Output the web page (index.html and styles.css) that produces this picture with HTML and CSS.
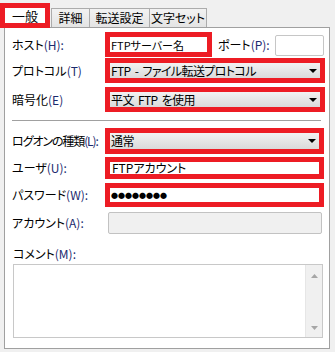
FILE: index.html
```html
<!DOCTYPE html>
<html lang="ja">
<head>
  <meta charset="UTF-8" />
  <title>サイトの設定</title>
  <link rel="stylesheet" href="styles.css">
</head>
<body>
  <div class="tabs">
    <div class="tab active">一般</div>
    <div class="tab w39">詳細</div>
    <div class="tab w61">転送設定</div>
    <div class="tab w58">文字セット</div>
  </div>

  <div class="panel">
    <div class="row r-host">
      <label class="lbl">ホスト<span class="key">(H):</span></label>
      <div class="mark host">
        <div class="field small">FTPサーバー名</div>
      </div>
      <label class="lbl port-lbl">ポート<span class="key">(P):</span></label>
      <div class="port"></div>
    </div>

    <div class="row r-proto">
      <label class="lbl">プロトコル<span class="key">(T)</span></label>
      <div class="mark wide">
        <div class="combo">
          <span>FTP - ファイル転送プロトコル</span>
          <svg width="8" height="4" viewBox="0 0 8 4"><path d="M0 0H8L4 4Z" fill="#000"/></svg>
        </div>
      </div>
    </div>

    <div class="row r-enc">
      <label class="lbl">暗号化<span class="key">(E)</span></label>
      <div class="mark wide">
        <div class="combo">
          <span>平文 FTP を使用</span>
          <svg width="8" height="4" viewBox="0 0 8 4"><path d="M0 0H8L4 4Z" fill="#000"/></svg>
        </div>
      </div>
    </div>

    <div class="sep"></div>

    <div class="row r-logon">
      <label class="lbl tight">ログオンの種類<span class="key">(L):</span></label>
      <div class="mark wide2">
        <div class="combo">
          <span>通常</span>
          <svg width="8" height="4" viewBox="0 0 8 4"><path d="M0 0H8L4 4Z" fill="#000"/></svg>
        </div>
      </div>
    </div>

    <div class="row r-user">
      <label class="lbl">ユーザ<span class="key">(U):</span></label>
      <div class="mark wide2">
        <div class="field">FTPアカウント</div>
      </div>
    </div>

    <div class="row r-pass">
      <label class="lbl">パスワード<span class="key">(W):</span></label>
      <div class="mark wide2">
        <div class="field dots">●●●●●●●●</div>
      </div>
    </div>

    <div class="row r-acct">
      <label class="lbl">アカウント<span class="key">(A):</span></label>
      <div class="disabled"></div>
    </div>

    <div class="comment-lbl">コメント<span class="key">(M):</span></div>
    <div class="memo">
      <div class="vscroll">
        <svg width="7" height="4" viewBox="0 0 7 4"><path d="M0 4L3.5 0L7 4Z" fill="#a6a6a6"/></svg>
        <svg width="7" height="4" viewBox="0 0 7 4"><path d="M0 0H7L3.5 4Z" fill="#a6a6a6"/></svg>
      </div>
    </div>
  </div>
</body>
</html>
```

FILE: styles.css
```css
* {
  margin: 0;
  padding: 0;
  box-sizing: border-box;
}

body {
  background: #f0f0f0;
  color: #000;
  font-family: "Noto Sans CJK JP", "Noto Sans", sans-serif;
  font-size: 12px;
  line-height: 16px;
  font-feature-settings: "palt";
  width: 335px;
  height: 352px;
  overflow: hidden;
}

/* tabs */
.tabs {
  display: flex;
  align-items: flex-end;
  height: 27px;
}

.tab {
  height: 19px;
  border: 1px solid #acacac;
  border-bottom: none;
  background: linear-gradient(#f2f2f2, #e4e4e4);
  text-align: center;
  line-height: 17px;
}

.tab.active {
  width: 50px;
  height: 25px;
  margin-bottom: -1px;
  border: 5px solid #ed1c24;
  background: #fff;
  line-height: 15px;
  position: relative;
  z-index: 1;
  font-size: 13px;
}

.w39 { width: 39px; margin-left: 1px; }
.w61 { width: 61px; margin-left: -1px; }
.w58 { width: 58px; margin-left: -1px; }

/* panel */
.panel {
  margin-left: 4px;
  width: 326px;
  height: 322px;
  border: 1px solid #a0a0a0;
  background: #fff;
  padding: 0 5px 0 7px;
}

.row {
  display: flex;
  align-items: center;
}

.lbl {
  width: 93px;
  flex-shrink: 0;
  white-space: nowrap;
}

.lbl.tight {
  letter-spacing: -1.1px;
}

.key {
  color: #1b2a6e;
}

.r-host { margin-top: 4px; height: 25px; }
.r-proto { margin-top: 1px; height: 25px; }
.r-enc { margin-top: 4px; height: 25px; }
.r-logon { margin-top: 7px; height: 26px; }
.r-user { margin-top: 3px; height: 22px; }
.r-pass { margin-top: 4px; height: 24px; }
.r-acct { margin-top: 5px; height: 22px; }

.sep {
  margin-top: 8px;
  width: 309px;
  height: 1px;
  background: #a0a0a0;
}

/* red highlight frames */
.mark {
  height: 100%;
  border: 5px solid #ed1c24;
  display: flex;
  flex-shrink: 0;
}

.host { width: 107px; }
.wide { width: 220px; }
.wide2 { width: 219px; }

.field {
  flex: 1;
  display: flex;
  align-items: center;
  background: #fff;
  padding-left: 2px;
  white-space: nowrap;
}

.field.small {
  font-size: 11px;
  padding-left: 1px;
}

.field.dots {
  font-size: 7px;
  letter-spacing: 0;
  padding-left: 1px;
}

.combo {
  flex: 1;
  display: flex;
  align-items: center;
  justify-content: space-between;
  padding: 0 3px 0 1px;
  background: linear-gradient(#f2f2f2, #dadada);
  white-space: nowrap;
  letter-spacing: -0.6px;
  word-spacing: 2px;
}

.port-lbl {
  width: auto;
  margin-left: 6px;
}

.port {
  margin-left: 5px;
  margin-top: 1px;
  width: 50px;
  height: 21px;
  border: 1px solid #c6c6c6;
  border-radius: 2px;
  background: #fff;
}

.disabled {
  margin-left: 3px;
  width: 214px;
  height: 22px;
  border: 1px solid #c2c2c2;
  border-radius: 2px;
  background: #f0f0f0;
}

/* comment */
.comment-lbl {
  margin-top: 12px;
  margin-left: 1px;
  height: 16px;
}

.memo {
  margin-top: 2px;
  margin-left: 1px;
  width: 310px;
  height: 74px;
  border: 1px solid #c8c8c8;
  display: flex;
  justify-content: flex-end;
}

.vscroll {
  width: 17px;
  background: #f0f0f0;
  border-left: 1px solid #e6e6e6;
  display: flex;
  flex-direction: column;
  justify-content: space-between;
  align-items: center;
  padding: 9px 0 7px;
}
```
